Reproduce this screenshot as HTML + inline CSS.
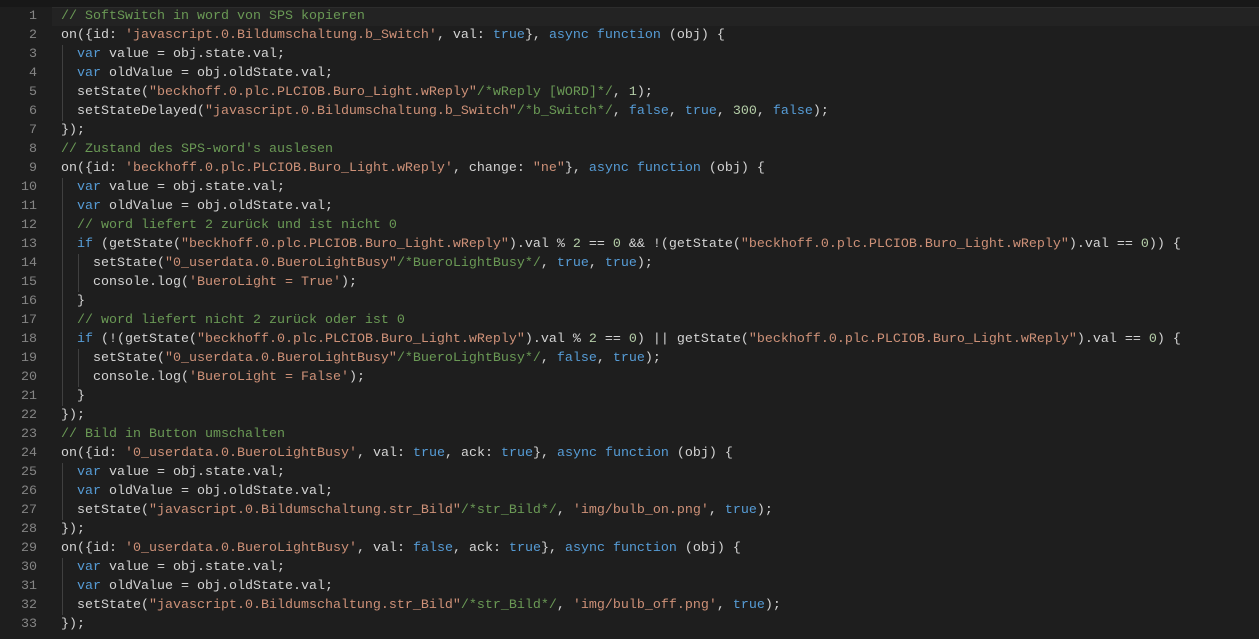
<!DOCTYPE html><html><head><meta charset="utf-8"><style>
body{margin:0;background:#1e1e1e;width:1259px;height:639px;overflow:hidden;font-family:"Liberation Mono",monospace;font-size:13.33px;}
.top{height:7px;background:#181818}
.l{position:relative;height:19px;line-height:19px;white-space:pre;color:#d4d4d4}
.n{position:absolute;left:0;width:37px;text-align:right;color:#858585}
.c0{position:absolute;left:61px}
.cur:before{content:"";position:absolute;left:52px;right:0;top:0;height:19px;background:#232323;border-top:1px solid #2c2c2c;box-sizing:border-box}
.k{color:#569cd6}.s{color:#ce9178}.c{color:#6a9955}.d{color:#b5cea8}
.g{position:absolute;top:0;width:1px;height:19px;background:#404040}
</style></head><body><div class="top"></div>
<div class="l cur"><span class="n">1</span><span class="c0"><span class="c">// SoftSwitch in word von SPS kopieren</span></span></div>
<div class="l"><span class="n">2</span><span class="c0">on({id: <span class="s">'javascript.0.Bildumschaltung.b_Switch'</span>, val: <span class="k">true</span>}, <span class="k">async function</span> (obj) {</span></div>
<div class="l"><span class="n">3</span><span class="g" style="left:62px"></span><span class="c0">  <span class="k">var</span> value = obj.state.val;</span></div>
<div class="l"><span class="n">4</span><span class="g" style="left:62px"></span><span class="c0">  <span class="k">var</span> oldValue = obj.oldState.val;</span></div>
<div class="l"><span class="n">5</span><span class="g" style="left:62px"></span><span class="c0">  setState(<span class="s">"beckhoff.0.plc.PLCIOB.Buro_Light.wReply"</span><span class="c">/*wReply [WORD]*/</span>, <span class="d">1</span>);</span></div>
<div class="l"><span class="n">6</span><span class="g" style="left:62px"></span><span class="c0">  setStateDelayed(<span class="s">"javascript.0.Bildumschaltung.b_Switch"</span><span class="c">/*b_Switch*/</span>, <span class="k">false</span>, <span class="k">true</span>, <span class="d">300</span>, <span class="k">false</span>);</span></div>
<div class="l"><span class="n">7</span><span class="c0">});</span></div>
<div class="l"><span class="n">8</span><span class="c0"><span class="c">// Zustand des SPS-word's auslesen</span></span></div>
<div class="l"><span class="n">9</span><span class="c0">on({id: <span class="s">'beckhoff.0.plc.PLCIOB.Buro_Light.wReply'</span>, change: <span class="s">"ne"</span>}, <span class="k">async function</span> (obj) {</span></div>
<div class="l"><span class="n">10</span><span class="g" style="left:62px"></span><span class="c0">  <span class="k">var</span> value = obj.state.val;</span></div>
<div class="l"><span class="n">11</span><span class="g" style="left:62px"></span><span class="c0">  <span class="k">var</span> oldValue = obj.oldState.val;</span></div>
<div class="l"><span class="n">12</span><span class="g" style="left:62px"></span><span class="c0">  <span class="c">// word liefert 2 zurück und ist nicht 0</span></span></div>
<div class="l"><span class="n">13</span><span class="g" style="left:62px"></span><span class="c0">  <span class="k">if</span> (getState(<span class="s">"beckhoff.0.plc.PLCIOB.Buro_Light.wReply"</span>).val % <span class="d">2</span> == <span class="d">0</span> &amp;&amp; !(getState(<span class="s">"beckhoff.0.plc.PLCIOB.Buro_Light.wReply"</span>).val == <span class="d">0</span>)) {</span></div>
<div class="l"><span class="n">14</span><span class="g" style="left:62px"></span><span class="g" style="left:78px"></span><span class="c0">    setState(<span class="s">"0_userdata.0.BueroLightBusy"</span><span class="c">/*BueroLightBusy*/</span>, <span class="k">true</span>, <span class="k">true</span>);</span></div>
<div class="l"><span class="n">15</span><span class="g" style="left:62px"></span><span class="g" style="left:78px"></span><span class="c0">    console.log(<span class="s">'BueroLight = True'</span>);</span></div>
<div class="l"><span class="n">16</span><span class="g" style="left:62px"></span><span class="c0">  }</span></div>
<div class="l"><span class="n">17</span><span class="g" style="left:62px"></span><span class="c0">  <span class="c">// word liefert nicht 2 zurück oder ist 0</span></span></div>
<div class="l"><span class="n">18</span><span class="g" style="left:62px"></span><span class="c0">  <span class="k">if</span> (!(getState(<span class="s">"beckhoff.0.plc.PLCIOB.Buro_Light.wReply"</span>).val % <span class="d">2</span> == <span class="d">0</span>) || getState(<span class="s">"beckhoff.0.plc.PLCIOB.Buro_Light.wReply"</span>).val == <span class="d">0</span>) {</span></div>
<div class="l"><span class="n">19</span><span class="g" style="left:62px"></span><span class="g" style="left:78px"></span><span class="c0">    setState(<span class="s">"0_userdata.0.BueroLightBusy"</span><span class="c">/*BueroLightBusy*/</span>, <span class="k">false</span>, <span class="k">true</span>);</span></div>
<div class="l"><span class="n">20</span><span class="g" style="left:62px"></span><span class="g" style="left:78px"></span><span class="c0">    console.log(<span class="s">'BueroLight = False'</span>);</span></div>
<div class="l"><span class="n">21</span><span class="g" style="left:62px"></span><span class="c0">  }</span></div>
<div class="l"><span class="n">22</span><span class="c0">});</span></div>
<div class="l"><span class="n">23</span><span class="c0"><span class="c">// Bild in Button umschalten</span></span></div>
<div class="l"><span class="n">24</span><span class="c0">on({id: <span class="s">'0_userdata.0.BueroLightBusy'</span>, val: <span class="k">true</span>, ack: <span class="k">true</span>}, <span class="k">async function</span> (obj) {</span></div>
<div class="l"><span class="n">25</span><span class="g" style="left:62px"></span><span class="c0">  <span class="k">var</span> value = obj.state.val;</span></div>
<div class="l"><span class="n">26</span><span class="g" style="left:62px"></span><span class="c0">  <span class="k">var</span> oldValue = obj.oldState.val;</span></div>
<div class="l"><span class="n">27</span><span class="g" style="left:62px"></span><span class="c0">  setState(<span class="s">"javascript.0.Bildumschaltung.str_Bild"</span><span class="c">/*str_Bild*/</span>, <span class="s">'img/bulb_on.png'</span>, <span class="k">true</span>);</span></div>
<div class="l"><span class="n">28</span><span class="c0">});</span></div>
<div class="l"><span class="n">29</span><span class="c0">on({id: <span class="s">'0_userdata.0.BueroLightBusy'</span>, val: <span class="k">false</span>, ack: <span class="k">true</span>}, <span class="k">async function</span> (obj) {</span></div>
<div class="l"><span class="n">30</span><span class="g" style="left:62px"></span><span class="c0">  <span class="k">var</span> value = obj.state.val;</span></div>
<div class="l"><span class="n">31</span><span class="g" style="left:62px"></span><span class="c0">  <span class="k">var</span> oldValue = obj.oldState.val;</span></div>
<div class="l"><span class="n">32</span><span class="g" style="left:62px"></span><span class="c0">  setState(<span class="s">"javascript.0.Bildumschaltung.str_Bild"</span><span class="c">/*str_Bild*/</span>, <span class="s">'img/bulb_off.png'</span>, <span class="k">true</span>);</span></div>
<div class="l"><span class="n">33</span><span class="c0">});</span></div>
</body></html>
